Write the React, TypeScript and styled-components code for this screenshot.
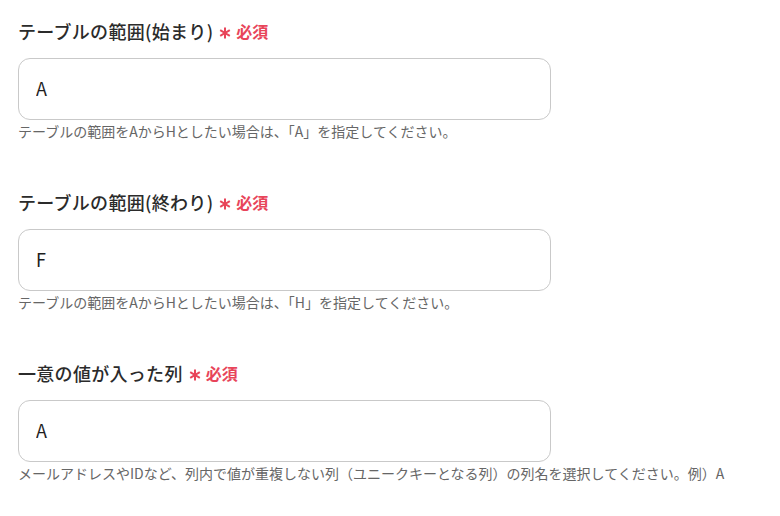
import React from "react";
import styled, { createGlobalStyle } from "styled-components";

const Global = createGlobalStyle`
  html, body { margin: 0; padding: 0; background: #fff; }
  body { font-family: "Noto Sans CJK JP", "Noto Sans", sans-serif; color: #222; }
  * { box-sizing: border-box; }
`;

const Page = styled.div`
  padding: 18px 0 0 18px;
  width: 780px;
  display: flex;
  flex-direction: column;
  gap: 47px;
`;

const Field = styled.div`
  display: flex;
  flex-direction: column;
`;

const Label = styled.div`
  display: flex;
  align-items: center;
  font-size: 18px;
  line-height: 27px;
  font-weight: 500;
  letter-spacing: 0.3px;
  color: #2b2b2b;
  margin-bottom: 13px;
`;

const Required = styled.span`
  display: inline-flex;
  align-items: center;
  margin-left: 6px;
  color: #e8455a;
  font-size: 16px;
  font-weight: 700;
  letter-spacing: 0;
  gap: 5px;
`;

const StarIcon = styled.svg`
  width: 12px;
  height: 12px;
  position: relative;
  top: 1px;
`;

const Input = styled.input`
  width: 533px;
  height: 62px;
  border: 1px solid #c9c9c9;
  border-radius: 12px;
  padding: 0 17px 2px 17px;
  font-family: "Noto Sans CJK JP", "Noto Sans", sans-serif;
  font-size: 18px;
  color: #1e1e1e;
  outline: none;
  background: #fff;
`;

const Help = styled.div`
  margin-top: 1px;
  font-size: 14px;
  line-height: 21px;
  color: #666;
`;

const Star = () => (
  <StarIcon viewBox="0 0 12 12">
    <g stroke="currentColor" strokeWidth="2" strokeLinecap="butt">
      <line x1="6" y1="0.5" x2="6" y2="11.5" />
      <line x1="1.2" y1="3.2" x2="10.8" y2="8.8" />
      <line x1="1.2" y1="8.8" x2="10.8" y2="3.2" />
    </g>
  </StarIcon>
);

const fields = [
  {
    label: "テーブルの範囲(始まり)",
    value: "A",
    help: "テーブルの範囲をAからHとしたい場合は、「A」を指定してください。",
  },
  {
    label: "テーブルの範囲(終わり)",
    value: "F",
    help: "テーブルの範囲をAからHとしたい場合は、「H」を指定してください。",
  },
  {
    label: "一意の値が入った列",
    value: "A",
    help: "メールアドレスやIDなど、列内で値が重複しない列（ユニークキーとなる列）の列名を選択してください。例）A",
  },
];

export default function App() {
  return (
    <>
      <Global />
      <Page>
        {fields.map((f) => (
          <Field key={f.label}>
            <Label>
              {f.label}
              <Required>
                <Star />
                必須
              </Required>
            </Label>
            <Input defaultValue={f.value} readOnly />
            <Help>{f.help}</Help>
          </Field>
        ))}
      </Page>
    </>
  );
}
